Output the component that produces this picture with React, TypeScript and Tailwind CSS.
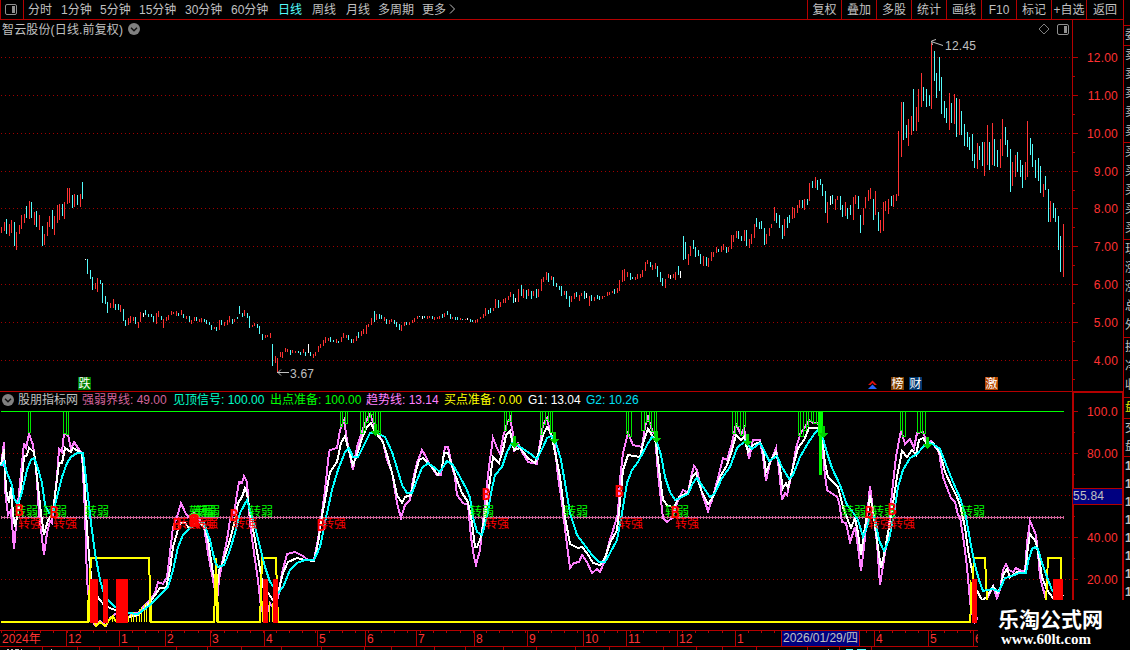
import { clsx } from "clsx";

const RED = "#b40000";

const periods = [
  { label: "分时", width: "w-[33px]" },
  { label: "1分钟", width: "w-[39px]" },
  { label: "5分钟", width: "w-[39px]" },
  { label: "15分钟", width: "w-[46px]" },
  { label: "30分钟", width: "w-[46px]" },
  { label: "60分钟", width: "w-[47px]" },
  { label: "日线", width: "w-[34px]", active: true },
  { label: "周线", width: "w-[34px]" },
  { label: "月线", width: "w-[32px]" },
  { label: "多周期", width: "w-[44px]" },
  { label: "更多", width: "w-[26px]" },
];

const actions = [
  { label: "复权", width: "w-[34px]" },
  { label: "叠加", width: "w-[35px]" },
  { label: "多股", width: "w-[35px]" },
  { label: "统计", width: "w-[35px]" },
  { label: "画线", width: "w-[35px]" },
  { label: "F10", width: "w-[35px]" },
  { label: "标记", width: "w-[35px]" },
  { label: "+自选", width: "w-[35px]" },
  { label: "返回", width: "w-[37px]" },
];

const indicators = [
  { text: "股朋指标网", className: "w-[64px] text-[#c0c0c0]" },
  { text: "强弱界线: 49.00", className: "w-[91px] text-[#d2649b]" },
  { text: "见顶信号: 100.00", className: "w-[97px] text-[#00ffc8]" },
  { text: "出点准备: 100.00", className: "w-[96px] text-[#00ff00]" },
  { text: "趋势线: 13.14", className: "w-[78px] text-[#ff80ff]" },
  { text: "买点准备: 0.00", className: "w-[84px] text-[#ffff00]" },
  { text: "G1: 13.04", className: "w-[58px] text-white" },
  { text: "G2: 10.26", className: "w-[56px] text-[#00e1f5]" },
];

// x, high, low, colour (r = up, c = down, w = flat)
const candleData = `
1,227,233,r 4,222,231,r 6,219,234,c 9,224,236,r 11,220,233,r 14,222,246,c 16,232,250,r 19,225,234,r
21,215,229,r 24,214,223,r 26,206,218,c 29,201,219,r 31,202,218,c 34,212,225,r 36,211,227,c 39,215,230,r
42,226,246,c 44,234,245,r 47,222,236,r 49,216,227,r 52,210,229,c 54,216,235,r 57,205,223,r 59,204,220,r
62,204,216,c 64,202,219,r 67,188,204,r 69,188,203,r 72,195,208,c 74,194,207,r 77,195,205,c 80,194,207,r
82,182,199,c 85,259,260,w 87,259,274,c 90,270,279,c 92,277,290,c 95,283,289,r 97,278,292,r 100,280,284,c
102,283,303,c 105,296,304,c 107,302,313,c 110,303,308,r 113,299,308,r 115,304,310,c 118,304,310,c 120,305,312,r
123,309,321,c 125,320,326,c 128,318,325,r 130,316,323,r 133,317,321,r 135,317,324,c 138,322,328,r 140,312,322,r
143,313,317,w 145,310,315,c 148,314,317,c 151,314,317,c 153,316,322,c 156,313,324,r 158,311,317,r 161,316,320,c
163,319,328,r 166,317,321,r 168,315,320,r 171,311,315,r 173,312,314,r 176,311,316,r 178,313,316,c 181,310,315,r
183,314,318,c 186,316,319,r 189,316,322,c 191,320,324,r 194,317,321,r 196,317,321,c 199,319,322,r 201,318,322,r
204,319,322,c 206,320,324,c 209,322,325,c 211,325,330,c 214,327,329,r 216,327,331,c 219,320,330,r 221,320,325,c
224,322,326,r 227,320,325,r 229,316,322,r 232,319,324,c 234,319,322,r 237,317,319,c 239,306,314,c 242,313,317,c
244,310,316,r 247,313,318,c 249,316,328,c 252,325,327,r 254,323,326,r 257,324,328,c 259,326,334,c 262,334,340,c
265,335,338,r 267,335,337,r 270,333,338,r 272,344,366,c 275,356,363,r 277,358,373,r 280,352,357,r 282,352,358,r
285,348,352,r 287,349,352,r 290,350,355,c 292,350,353,r 295,351,353,r 298,351,353,c 300,352,355,c 303,349,353,r
305,352,356,c 308,344,353,w 310,352,356,c 313,354,358,r 315,352,356,r 318,346,352,r 320,344,348,r 323,340,346,r
325,337,343,r 328,338,341,r 330,337,342,c 333,340,342,c 336,339,343,r 338,341,343,c 341,337,342,r 343,333,338,r
346,335,338,r 348,335,340,c 351,339,343,c 353,339,343,r 356,336,341,r 358,332,338,c 361,331,336,r 363,329,334,r
366,325,334,r 368,324,327,r 371,318,325,r 374,311,322,c 376,314,320,r 379,314,319,c 381,315,319,c 384,317,321,r
386,319,324,c 389,320,324,r 391,319,322,r 394,320,324,c 396,322,327,c 399,324,330,c 401,325,331,r 404,322,326,r
406,322,325,c 409,322,325,r 412,320,323,r 414,318,322,r 417,316,319,r 419,316,317,c 422,316,319,w 424,316,318,c
427,316,319,r 429,316,318,r 432,316,319,c 434,317,320,r 437,317,319,r 439,316,319,r 442,314,318,c 444,313,317,r
447,311,315,c 450,314,319,c 452,317,319,r 455,317,320,c 457,317,320,c 460,318,320,r 462,319,320,c 465,319,320,r
467,318,320,w 470,319,322,c 472,320,322,c 475,320,323,r 477,319,322,r 480,317,319,r 483,314,318,r 485,308,316,r
488,310,314,c 490,308,313,c 493,308,311,r 495,299,308,r 498,300,308,c 500,302,307,r 503,299,303,r 505,298,303,r
508,296,300,r 510,292,297,r 513,294,303,c 515,298,302,w 518,289,302,r 521,285,296,c 523,289,298,r 526,290,299,c
528,289,296,r 531,291,299,c 533,291,296,r 536,289,298,c 538,289,297,r 541,279,291,r 543,277,282,r 546,272,280,r
548,273,282,c 551,276,280,r 553,277,286,c 556,283,287,c 559,286,290,c 561,286,296,c 564,291,295,r 566,291,299,c
569,296,307,c 571,296,302,r 574,293,299,r 576,292,297,c 579,295,301,r 581,293,296,r 584,291,299,c 586,293,298,w
589,296,306,r 591,295,301,c 594,297,301,r 597,295,299,c 599,296,300,c 602,296,299,r 604,296,297,r 607,292,296,r
609,292,295,r 612,291,293,r 614,289,294,c 617,288,293,r 619,280,291,r 622,270,282,r 624,269,281,r 627,272,277,r
630,273,280,c 632,277,279,c 635,277,280,r 637,274,279,r 640,274,278,r 642,270,277,r 645,262,271,r 647,260,264,r
650,262,267,c 652,265,270,r 655,263,269,r 657,266,277,c 660,272,282,c 662,278,286,c 665,279,288,r 668,274,278,r
670,275,279,w 673,274,278,r 675,272,280,r 678,266,275,c 680,271,278,w 683,236,260,c 685,242,259,c 688,254,265,r
690,246,256,r 693,240,249,c 695,247,257,c 698,250,256,c 700,254,264,c 703,256,266,r 706,257,266,c 708,258,267,r
711,252,261,r 713,252,257,r 716,247,253,r 718,249,252,c 721,246,252,r 723,244,250,r 726,247,253,c 728,247,252,r
731,235,249,r 733,235,242,r 736,231,238,r 738,231,239,c 741,236,241,c 744,230,241,r 746,230,246,c 749,239,248,r
751,234,244,r 754,224,238,r 756,218,227,c 759,222,229,c 761,221,229,c 764,228,245,c 766,234,244,r 769,228,236,r
771,224,228,r 774,207,221,r 776,213,223,c 779,215,228,c 782,225,239,c 784,219,236,r 787,217,228,c 789,215,223,c
792,207,219,r 794,208,218,r 797,205,213,r 799,200,208,r 802,200,208,c 804,199,210,r 807,199,205,c 809,183,201,r
812,181,188,c 815,177,188,r 817,180,190,c 820,179,185,c 822,184,196,c 825,191,213,c 827,202,223,r 830,196,205,w
832,195,204,c 835,199,210,r 837,196,200,r 840,196,210,c 842,205,217,c 845,202,216,r 847,208,219,c 850,205,215,c
853,197,220,r 855,195,204,r 858,196,209,c 860,215,233,c 863,208,225,r 865,197,208,r 868,190,201,r 870,188,199,r
873,199,220,c 875,191,215,r 878,212,231,c 880,220,233,r 883,202,231,r 885,201,211,r 888,199,214,r 891,196,206,c
893,195,207,r 896,194,201,r 898,131,196,r 901,102,157,r 903,102,140,c 906,125,138,c 908,119,146,r 911,116,135,r
913,89,131,c 916,107,131,r 918,89,122,r 921,73,107,r 923,87,101,c 926,89,107,c 929,95,106,c 931,43,109,r
934,51,81,c 936,73,98,c 939,57,91,c 941,77,114,c 944,101,118,c 946,108,123,c 949,93,130,r 951,103,123,c
954,94,124,r 956,98,137,c 959,99,135,r 961,111,135,c 964,124,146,c 967,132,147,c 969,137,150,c 972,134,161,c
974,154,168,c 977,143,169,r 979,146,160,c 982,142,166,c 984,142,176,r 987,125,165,r 989,142,170,c 992,123,165,r
994,139,166,c 997,150,167,c 1000,139,168,r 1002,119,156,r 1005,127,145,c 1007,140,157,c 1010,149,192,c
1012,162,186,r 1015,155,177,r 1017,152,172,c 1020,160,177,c 1022,165,188,c 1025,162,180,r 1027,121,177,r
1030,138,155,c 1032,144,167,c 1035,160,178,c 1038,158,181,c 1040,166,193,c 1043,184,197,r 1045,176,190,c
1048,189,222,c 1050,201,222,r 1053,203,218,c 1055,208,222,c 1058,216,250,c 1060,236,272,c 1063,224,277,r
`;

const candleColors: Record<string, string> = { r: "#ff3232", c: "#54fcfc", w: "#ffffff" };

const candles = candleData
  .trim()
  .split(/\s+/)
  .map((row) => {
    const [x, high, low, kind] = row.split(",");
    return { x: +x, high: +high, low: +low, color: candleColors[kind] };
  });

const trendLine = `1,466 4,442 5,490 8,515 11,510 14,549 17,513 19,493 24,443 26,448 29,434 33,445 36,467 39,513 44,555 47,533
50,521 52,523 54,503 57,477 59,449 62,452 64,434 68,435 71,449 74,442 78,448 82,453 85,513 87,580 91,620 95,625 100,621
106,626 110,618 115,614 128,618 133,613 138,613 147,603 155,593 158,582 163,584 167,577 170,553 173,527 177,517 181,503
185,512 188,517 194,513 200,520 204,527 208,553 213,580 217,601 219,580 222,563 227,540 230,520 234,513 239,482 242,483
244,476 247,482 250,523 254,553 258,580 261,607 265,621 270,603 273,608 278,598 282,573 287,554 295,552 303,556 308,560
314,560 318,540 322,513 325,490 329,452 330,450 337,448 340,430 344,420 347,440 353,470 357,447 361,435 365,423 370,414
373,422 377,432 383,442 387,460 392,472 397,503 401,518 405,505 410,500 413,480 417,463 422,450 426,457 430,465 437,475
441,475 445,447 448,447 451,462 455,477 457,495 463,503 468,505 471,537 474,557 476,565 480,550 483,523 486,493 489,467
493,438 497,448 500,454 503,437 507,423 510,418 513,433 514,452 518,443 522,452 528,462 537,464 540,443 543,425 547,418
550,432 555,447 558,477 562,503 566,537 570,568 574,563 579,562 582,555 587,562 592,573 597,569 600,572 605,560 609,543
614,527 618,513 620,480 623,453 628,433 633,445 642,447 645,427 648,417 652,430 655,435 658,473 661,500 663,518 667,522
672,518 677,503 683,490 688,493 691,477 694,466 697,470 702,493 708,511 712,500 718,478 723,458 727,460 732,443 736,424
741,435 744,428 747,445 749,459 753,440 760,440 763,457 766,481 770,463 776,448 779,470 782,500 785,493 787,495 792,472
796,448 801,432 805,427 809,420 813,423 818,423 822,435 824,467 827,490 837,497 839,502 842,522 846,523 850,542 855,527
858,547 861,571 864,547 868,507 870,486 873,510 877,543 880,585 885,553 889,527 892,493 896,457 901,430 905,444 910,439
914,448 917,433 923,432 927,443 931,441 939,452 943,477 947,488 951,498 955,502 958,515 960,517 964,543 967,567 969,590
971,610 975,622 982,612 988,597 993,586 997,598 1000,590 1003,570 1006,564 1009,570 1013,572 1016,568 1019,570 1025,572
1027,543 1030,521 1036,535 1038,553 1040,577 1046,600`;

const g1Line = `1,465 4,449 6,490 9,503 11,487 13,513 15,527 18,513 21,487 24,457 27,455 29,448 34,452 37,477 41,513 44,535
48,520 53,513 56,487 59,463 62,463 65,448 71,452 73,448 82,453 85,490 87,530 90,567 93,590 100,600 104,605 110,608
115,610 128,617 138,615 150,602 155,595 160,588 166,588 170,570 173,547 177,533 180,523 185,523 189,528 193,525 198,522
204,526 208,540 213,573 217,587 219,570 223,562 230,540 235,520 238,503 242,497 245,488 247,493 250,513 255,540 259,563
263,587 268,593 273,600 278,593 283,573 288,562 297,558 305,560 314,561 318,543 323,510 325,500 330,472 337,462 341,443
345,436 348,448 353,465 357,455 362,438 367,427 371,423 375,432 383,442 388,458 393,477 397,495 402,503 405,497 411,495
415,475 419,460 423,458 430,465 438,475 442,468 444,453 448,453 451,463 457,480 462,493 468,502 472,523 475,547 477,547
481,537 486,510 490,480 493,457 499,463 503,450 506,435 510,431 514,450 520,448 528,458 535,463 538,455 543,435 547,427
551,433 555,452 560,477 565,517 570,544 578,548 582,547 587,553 593,563 600,565 605,558 610,543 617,530 620,503 623,470
628,455 640,457 644,440 648,429 652,435 656,443 660,477 663,500 668,506 674,507 679,497 688,493 692,477 696,473 701,490
708,504 713,497 720,477 727,465 732,450 736,435 741,440 744,437 748,452 753,445 760,442 763,450 766,472 771,460 776,452
779,463 783,488 786,483 788,488 793,467 798,448 804,440 809,428 818,428 822,437 825,463 828,477 838,487 843,507 847,518
851,528 855,518 858,533 861,555 864,533 868,510 870,495 874,517 877,540 881,568 885,550 889,527 893,503 897,477 902,451
907,457 912,450 916,455 919,440 923,438 927,444 933,443 940,453 945,472 952,487 957,497 960,505 965,527 968,550 972,570
975,587 982,600 987,597 993,586 997,593 1001,587 1003,575 1007,569 1010,577 1017,572 1025,573 1028,547 1030,534 1036,542
1039,557 1042,577 1047,590 1053,598 1060,602 1063,595`;

const g2Line = `1,466 4,462 7,473 12,485 14,498 18,505 22,492 27,470 31,460 34,458 37,465 42,483 45,505 49,513 53,513 57,497
62,477 67,463 71,457 77,453 83,453 87,487 91,523 95,553 100,580 105,597 115,607 128,613 138,614 150,605 160,595 168,587
173,570 178,547 183,535 190,528 200,522 204,523 210,540 215,562 218,567 224,565 230,550 235,533 240,513 247,500 250,510
255,527 260,547 265,567 270,582 278,593 283,587 290,570 297,563 305,560 314,560 320,547 327,513 332,490 338,470 345,452
349,448 353,457 358,457 363,447 370,433 375,432 385,437 392,452 397,468 402,485 407,493 412,493 417,480 422,468 428,463
435,468 440,472 447,461 453,465 460,477 467,490 470,498 473,517 477,532 482,535 487,517 491,493 495,475 502,467 507,452
512,443 520,447 528,452 537,459 543,447 547,438 551,436 556,443 561,460 565,483 570,513 577,535 583,543 592,555 599,562
605,562 610,553 617,540 622,513 627,483 632,470 638,462 647,445 652,437 657,442 661,455 665,477 670,492 675,500 680,498
688,494 693,483 697,478 703,487 710,497 715,493 722,478 730,467 737,448 745,441 752,449 760,443 764,450 769,461 777,456
782,467 789,479 793,475 800,457 808,443 815,433 818,430 823,438 827,453 832,468 840,485 847,505 855,515 858,520 863,537
867,527 871,513 875,518 879,540 884,551 889,540 894,513 898,487 903,470 910,458 917,454 923,447 928,443 933,444 940,449
947,467 953,482 960,498 966,517 970,540 975,565 979,580 983,591 992,589 999,591 1005,578 1012,576 1019,573 1026,573
1028,562 1032,549 1035,547 1038,549 1042,563 1047,577 1052,590 1058,597`;

const yellowLines = [
  "1,622 88,622 91,558 149,558 151,622 214,622 216,558 218,622 260,622 262,558 276,558 278,622 970,622 974,558 985,558 987,602",
  "91,622 94,622 96,626 100,622 105,626 110,619 113,616 116,622",
  "1046,602 1048,558 1061,558 1062,602",
];

// x, top of the small accumulation columns
const yellowColumns = [
  [87, 600], [89, 600], [112, 616], [128, 616], [131, 613], [133, 612], [136, 616], [139, 609], [141, 607],
  [144, 604], [146, 603], [149, 603], [151, 603], [214, 602], [216, 562], [218, 602], [260, 600], [262, 601],
  [269, 602], [272, 603], [970, 580], [1046, 580],
];

const redColumns = [
  [90, 8], [103, 5], [116, 12], [263, 5], [273, 5], [972, 5], [1053, 10],
];

// edges of each run of boxes, and how deep each box hangs
const topSignals = [
  { edges: [28, 30], depth: [432] },
  { edges: [63, 66, 68], depth: [433, 434] },
  { edges: [340, 342, 345, 347], depth: [426, 421, 423] },
  { edges: [360, 363, 365, 368, 370, 373, 375, 378, 380], depth: [433, 430, 422, 417, 414, 422, 430, 434] },
  { edges: [504, 506, 509, 511], depth: [430, 420, 421] },
  { edges: [540, 542, 545, 548, 550, 552], depth: [434, 424, 419, 421, 432] },
  { edges: [626, 628, 631], depth: [433, 436] },
  { edges: [641, 644, 646, 649, 651, 654, 656], depth: [430, 422, 420, 424, 431, 436] },
  { edges: [732, 735, 737, 740, 743, 745], depth: [433, 424, 426, 435, 426] },
  { edges: [798, 800, 803, 806, 808, 811, 813, 816, 818], depth: [435, 436, 430, 426, 420, 421, 423, 423] },
  { edges: [900, 902, 905], depth: [430, 436] },
  { edges: [917, 920, 922, 925], depth: [432, 431, 433] },
];

const sellArrows = [
  [375, 436], [514, 448], [554, 444], [656, 443], [747, 446], [823, 438], [927, 449],
];

const weakLabels = [14, 43, 85, 189, 192, 196, 249, 470, 564, 665, 842, 872, 961];
const strongLabels = [18, 53, 176, 190, 194, 233, 322, 485, 619, 675, 868, 891];
const buyMarks = [
  [19, 511], [54, 513], [177, 525], [193, 522], [195, 521], [234, 516], [321, 526], [486, 495], [619, 492],
  [675, 513], [869, 513], [892, 510],
];

const priceTicks = [
  { y: 57, label: "12.00" },
  { y: 95, label: "11.00" },
  { y: 133, label: "10.00" },
  { y: 171, label: "9.00" },
  { y: 208, label: "8.00" },
  { y: 246, label: "7.00" },
  { y: 284, label: "6.00" },
  { y: 322, label: "5.00" },
  { y: 360, label: "4.00" },
];

const levelTicks = [
  { y: 411, label: "100.0" },
  { y: 453, label: "80.00" },
  { y: 537, label: "40.00" },
  { y: 579, label: "20.00" },
];

const months = [
  { x: 66, label: "12" },
  { x: 119, label: "1" },
  { x: 165, label: "2" },
  { x: 210, label: "3" },
  { x: 264, label: "4" },
  { x: 317, label: "5" },
  { x: 365, label: "6" },
  { x: 416, label: "7" },
  { x: 474, label: "8" },
  { x: 527, label: "9" },
  { x: 583, label: "10" },
  { x: 626, label: "11" },
  { x: 677, label: "12" },
  { x: 735, label: "1" },
  { x: 874, label: "4" },
  { x: 928, label: "5" },
  { x: 973, label: "6" },
];

const lowerTicks = [
  42, 77, 99, 138, 176, 207, 241, 281, 321, 364, 391, 434, 465, 503, 536, 575, 609, 663, 696, 722, 756, 807, 839, 871,
];

// quote panel on the right, only its first few pixels are on screen
const quoteGroups = [
  { height: "h-[20px]", rows: ["委"], row: "h-[19px]" },
  { height: "h-[97px]", rows: ["卖", "卖", "卖", "卖", "卖"], row: "h-[19px]" },
  { height: "h-[97px]", rows: ["买", "买", "买", "买", "买"], row: "h-[19px]" },
  { height: "h-[98px]", rows: ["现", "涨", "涨", "总", "外"], row: "h-[19px]" },
  { height: "h-[60px]", rows: ["换", "净", "收"], row: "h-[19px]" },
  { height: "h-[21px]", rows: ["盘"], row: "h-[20px]", color: "text-[#e6e600]" },
  { height: "h-[38px]", rows: ["交", "盘"], row: "h-[18px]" },
  { height: "h-[144px]", rows: ["1", "1", "1", "1", "1", "1", "1", "1"], row: "h-[18px]", color: "font-bold" },
];

const PanelIcon = ({ className }: { className?: string }) => (
  <svg className={clsx("shrink-0", className)} width="12" height="11" viewBox="0 0 12 11">
    <rect x="0.5" y="0.5" width="11" height="10" rx="1.5" fill="none" stroke="#909090" />
    <rect x="7" y="2" width="3" height="7" fill="#909090" />
  </svg>
);

const DropCircle = () => (
  <svg className="shrink-0" width="12" height="12" viewBox="0 0 12 12">
    <circle cx="6" cy="6" r="6" fill="#808080" />
    <path d="M3 4.7 L6 7.7 L9 4.7" fill="none" stroke="#101010" strokeWidth="1.4" />
  </svg>
);

const GridLine = ({ y }: { y: number }) => (
  <line x1={1} x2={1071} y1={y + 0.5} y2={y + 0.5} stroke="#a00000" strokeDasharray="1 3" />
);

const Badge = ({ x, fill, text }: { x: number; fill: string; text: string }) => (
  <g>
    <rect x={x} y={377} width={13} height={13} fill={fill} />
    <text x={x + 0.5} y={388} fontSize={12} fill="#fff">{text}</text>
  </g>
);

function Toolbar() {
  return (
    <header className="flex h-[20px] items-stretch border-b border-[#b40000] leading-[20px] text-[#c0c0c0]">
      <div className="flex w-[24px] items-center border-x border-[#b40000] pl-[4px]">
        <PanelIcon />
      </div>
      <nav className="flex grow pl-[4px]">
        {periods.map((p) => (
          <span key={p.label} className={clsx("shrink-0", p.width, p.active && "text-[#54fcfc]")}>
            {p.label}
          </span>
        ))}
        <svg width="8" height="18" viewBox="0 0 8 18">
          <path d="M2 4.5 L6.5 9 L2 13.5" fill="none" stroke="#c0c0c0" />
        </svg>
      </nav>
      <div className="flex text-center whitespace-nowrap">
        {actions.map((a) => (
          <span key={a.label} className={clsx("border-l border-[#b40000]", a.width)}>{a.label}</span>
        ))}
      </div>
    </header>
  );
}

function PriceChart() {
  return (
    <section className="flex h-[371px]">
      <div className="flex w-[1072px] flex-col">
        <div className="flex h-[18px] items-center gap-[5px] pr-[3px] pl-[2px] text-[#c0c0c0]">
          <span className="pt-[2px] tracking-[0.15px]">智云股份(日线.前复权)</span>
          <DropCircle />
          <svg className="ml-auto" width="12" height="12" viewBox="0 0 12 12">
            <path d="M6 1 L11 6 L6 11 L1 6 Z" fill="none" stroke="#808080" />
          </svg>
          <PanelIcon className="ml-[2px]" />
        </div>
        <svg width="1072" height="353" viewBox="0 38 1072 353">
          <g shapeRendering="crispEdges">
            {priceTicks.map((t) => (
              <GridLine key={t.y} y={t.y} />
            ))}
            {candles.map((c) => (
              <rect key={c.x} x={c.x} y={c.high} width={1} height={c.low - c.high} fill={c.color} />
            ))}
          </g>
          <g stroke="#c0c0c0" fill="none">
            <path d="M277 372.5 H289 M281 369.5 L278 372.5 L281 375.5" />
            <path d="M931 41.5 L943 45.5 M936 39.5 L931.5 41 L932.5 45" />
          </g>
          <g fontSize={12} fill="#c0c0c0">
            <text x={290} y={378} textLength={24}>3.67</text>
            <text x={945} y={50} textLength={31}>12.45</text>
          </g>
          <Badge x={78} fill="#008000" text="跌" />
          <path d="M868 385 L872.5 380.5 L877 385 H874.5 L872.5 383 L870.5 385 Z" fill="#e01010" />
          <path d="M868 389 L872.5 384.5 L877 389 Z" fill="#2864ff" />
          <Badge x={891} fill="#804000" text="榜" />
          <Badge x={909} fill="#003870" text="财" />
          <Badge x={985} fill="#b44600" text="激" />
        </svg>
      </div>
      <svg width="51" height="371" viewBox="1072 20 51 371">
        <g fill={RED} shapeRendering="crispEdges">
          <rect x={1072} y={20} width={1} height={371} />
          {priceTicks.map((t) => (
            <g key={t.y}>
              <rect x={1072} y={t.y} width={6} height={1} />
              <rect x={1072} y={t.y + 19} width={3} height={1} />
            </g>
          ))}
        </g>
        <g fontSize={12} fill="#ff3232" letterSpacing={0.2}>
          {priceTicks.map((t) => (
            <text key={t.y} x={1118} y={t.y + 5} textAnchor="end">{t.label}</text>
          ))}
        </g>
      </svg>
    </section>
  );
}

function IndicatorChart() {
  return (
    <section className="flex h-[239px]">
      <div className="flex w-[1072px] flex-col border-t border-[#b40000]">
        <div className="flex h-[16px] items-center pl-[2px] whitespace-nowrap">
          <DropCircle />
          <div className="flex pl-[4px]">
            {indicators.map((i) => (
              <span key={i.text} className={clsx("shrink-0", i.className)}>{i.text}</span>
            ))}
          </div>
        </div>
        <svg width="1072" height="222" viewBox="0 408 1072 222">
          <g shapeRendering="crispEdges">
            {[453, 495, 537, 579].map((y) => (
              <GridLine key={y} y={y} />
            ))}
            <line x1={1} x2={1064} y1={517.5} y2={517.5} stroke="#d2649b" />
            <line x1={1} x2={1064} y1={517.5} y2={517.5} stroke="#d2649b" strokeWidth={3} strokeDasharray="1 2" />
            <g fill="none" strokeWidth={2}>
              <polyline points={trendLine} stroke="#ff80ff" />
              <polyline points={g1Line} stroke="#ffffff" />
              {yellowLines.map((points) => (
                <polyline key={points} points={points} stroke="#ffff00" />
              ))}
            </g>
            {yellowColumns.map(([x, y]) => (
              <rect key={x} x={x} y={y} width={1} height={622 - y} fill="#ffff00" />
            ))}
            <polyline points={g2Line} fill="none" stroke="#00ffff" strokeWidth={2} />
            {redColumns.map(([x, width]) => (
              <rect key={x} x={x} y={579} width={width} height={44} fill="#ff0000" />
            ))}
            <rect x={1} y={411} width={1063} height={1} fill="#00ff00" />
            <g fill="none" stroke="#00e600">
              {topSignals.map((s) =>
                s.depth.map((bottom, i) => (
                  <path
                    key={s.edges[i]}
                    d={`M${s.edges[i] + 0.5} 412 V${bottom + 0.5} H${s.edges[i + 1] + 0.5} V412`}
                  />
                ))
              )}
            </g>
            <rect x={818} y={412} width={5} height={24} fill="#00ff00" />
            <rect x={819} y={436} width={3} height={39} fill="#00ff00" />
            {sellArrows.map(([x, y]) => (
              <path
                key={x}
                d={`M${x - 1} ${y - 12} H${x + 2} V${y - 5} H${x + 5} L${x + 0.5} ${y} L${x - 4} ${y - 5} H${x - 1} Z`}
                fill="#00d200"
              />
            ))}
          </g>
          <g fontSize={12} fill="#00ff00">
            {weakLabels.map((x) => (
              <text key={x} x={x} y={516}>转弱</text>
            ))}
          </g>
          <g fontSize={12} fill="#ff0000">
            {strongLabels.map((x) => (
              <text key={x} x={x} y={528}>转强</text>
            ))}
          </g>
          <g fontSize={15} fontWeight={700} fill="#ff0000" textAnchor="middle" fontFamily="DejaVu Sans Mono, monospace">
            {buyMarks.map(([x, y]) => (
              <text key={x} x={x} y={y + 5}>B</text>
            ))}
          </g>
        </svg>
      </div>
      <svg width="51" height="239" viewBox="1072 391 51 239">
        <g fill={RED} shapeRendering="crispEdges">
          <rect x={1072} y={391} width={2} height={239} />
          <rect x={1072} y={391} width={51} height={2} />
          <rect x={1122} y={391} width={1} height={239} />
          {levelTicks.map((t) => (
            <rect key={t.y} x={1073} y={t.y} width={5} height={1} />
          ))}
          {[432, 474, 516, 558].map((y) => (
            <rect key={y} x={1073} y={y} width={2} height={1} />
          ))}
          <rect x={1073} y={488} width={49} height={17} />
        </g>
        <rect x={1073} y={489} width={49} height={15} fill="#000080" />
        <g fontSize={12}>
          <text x={1073} y={500} fill="#c0c0c0" textLength={31}>55.84</text>
          {levelTicks.map((t) => (
            <text key={t.y} x={1118} y={t.y + 5} fill="#ff3232" textAnchor="end" letterSpacing={0.2}>{t.label}</text>
          ))}
        </g>
      </svg>
    </section>
  );
}

function TimeAxis() {
  return (
    <svg className="block" width="1123" height="20" viewBox="0 630 1123 20">
      <g fill={RED} shapeRendering="crispEdges">
        <rect x={0} y={630} width={1123} height={1} />
        <rect x={0} y={646} width={1123} height={1} />
        {Array.from({ length: 75 }, (_, i) => (
          <rect key={i} x={Math.round(1 + i * 13.1)} y={631} width={1} height={2} />
        ))}
        {months.map((m) => (
          <rect key={m.x} x={m.x} y={631} width={1} height={15} />
        ))}
        {lowerTicks.map((x) => (
          <rect key={x} x={x} y={647} width={1} height={3} />
        ))}
        <rect x={781} y={630} width={79} height={17} />
      </g>
      <rect x={782} y={631} width={77} height={15} fill="#000080" />
      <g fontSize={12} fill="#ff3232">
        <text x={2} y={643}>2024年</text>
        {months.map((m) => (
          <text key={m.x} x={m.x + 2} y={643}>{m.label}</text>
        ))}
      </g>
      <text x={783} y={642} fontSize={12} fill="#c0c0c0" textLength={75}>2026/01/29/四</text>
      <g shapeRendering="crispEdges">
        <path d="M7 649.5 H9 M11 649.5 H13 M15 649.5 H19 M21 649.5 H22 M51 649.5 H52 M828 649.5 H829" stroke="#c0c0c0" />
        <path d="M846 649.5 H853 M857 649.5 H866" stroke="#54fcfc" />
      </g>
    </svg>
  );
}

function QuoteStrip() {
  return (
    <aside className="h-[650px] w-[7px] overflow-hidden border-l border-[#b40000] pt-[25px] text-[#c0c0c0]">
      {quoteGroups.map((g, i) => (
        <div key={i} className={clsx("overflow-hidden border-t border-[#b40000]", g.height, g.color)}>
          {g.rows.map((r, j) => (
            <div key={j} className={clsx("w-[24px] pl-[1px] leading-[19px]", g.row)}>{r}</div>
          ))}
        </div>
      ))}
    </aside>
  );
}

export default function App() {
  return (
    <div className="relative flex h-[650px] w-[1130px] overflow-hidden bg-black font-['Liberation_Sans','Noto_Sans_CJK_SC',sans-serif] text-[12px] leading-none">
      <main className="flex w-[1123px] flex-col">
        <Toolbar />
        <PriceChart />
        <IndicatorChart />
        <TimeAxis />
      </main>
      <QuoteStrip />
      <div className="absolute top-[600px] left-[978px] flex h-[50px] w-[152px] flex-col items-start bg-black pt-[8px] pl-[20px] text-white">
        <span className="text-[21px] leading-[24px] font-bold">乐淘公式网</span>
        <span className="pl-[3px] font-['Liberation_Serif',serif] text-[15px] leading-[15px] font-bold">www.60lt.com</span>
      </div>
    </div>
  );
}
